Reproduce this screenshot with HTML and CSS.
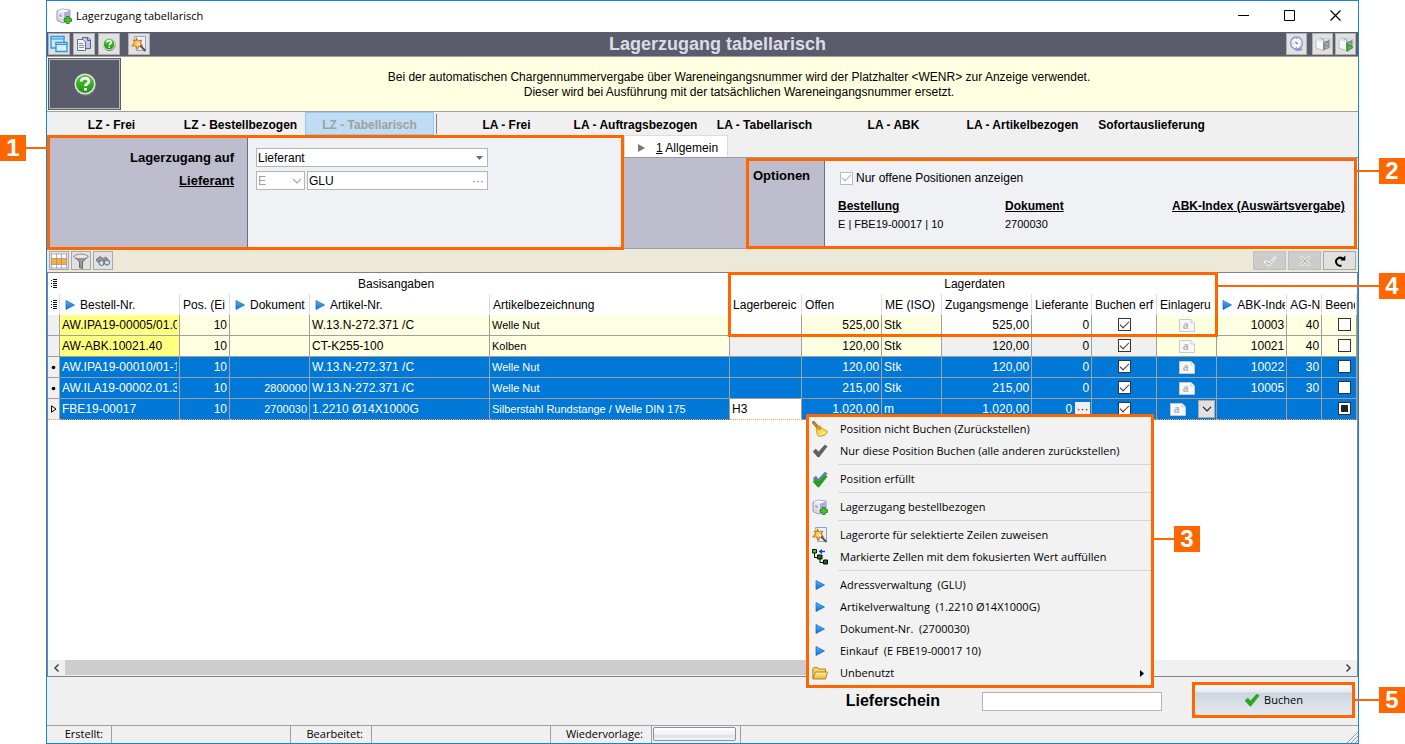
FILE: index.html
```html
<!DOCTYPE html>
<html lang="de">
<head>
<meta charset="utf-8">
<title>Lagerzugang tabellarisch</title>
<link rel="stylesheet" href="styles.css">
</head>
<body>
<svg class="defs" aria-hidden="true">
  <defs>
    <linearGradient id="gBlue" x1="0" y1="0" x2="0" y2="1"><stop offset="0" stop-color="#58b4f8"/><stop offset="1" stop-color="#0a6fd8"/></linearGradient>
    <linearGradient id="gFolder" x1="0" y1="0" x2="0" y2="1"><stop offset="0" stop-color="#fff0a8"/><stop offset="1" stop-color="#e8b53c"/></linearGradient>
    <linearGradient id="gGreen" x1="0" y1="0" x2="0" y2="1"><stop offset="0" stop-color="#52cc34"/><stop offset="1" stop-color="#1d9410"/></linearGradient>
    <symbol id="play" viewBox="0 0 10 10"><path d="M1 .5v9L9.500 5z" fill="url(#gBlue)" stroke="#1668bd" stroke-width=".7"/></symbol>
    <symbol id="box-plus" viewBox="0 0 16 16">
      <path d="M1 3 6 1l8 1v10L7 15 1 12.500z" fill="#e4e4f8" stroke="#8888b4" stroke-width=".9"/>
      <path d="M8 4.500v10L14 12V2.500z" fill="#aeaed4"/><path d="M1.500 3 8 4.500 13.500 2.200 6 1.200z" fill="#f8f8ff"/>
      <path d="M3 6l3 .8v2.400L3 8.500z" fill="#b0b0cc"/><path d="M2.500 11 5.500 12" stroke="#e8a860"/>
      <path d="M10.300 8.500h2.900v2.200h2.400v2.700h-2.400v2.200h-2.900v-2.200H8v-2.700h2.300z" fill="#4bc435" stroke="#167a0c" stroke-width=".8"/>
    </symbol>
    <symbol id="windows" viewBox="0 0 18 18">
      <path d="M6 13H1V1.500h13V7" fill="none" stroke="#1e9bf0" stroke-width="1.300"/><path d="M1 1.500h13v2.500H1z" fill="#9ad9fb" stroke="#1e9bf0"/>
      <path d="M6 7.500h11V16.500h-11z" fill="#e8ecf2" stroke="#1e9bf0" stroke-width="1.300"/><path d="M6 7.500h11v2h-11z" fill="#9ad9fb" stroke="#1e9bf0"/>
    </symbol>
    <symbol id="pages" viewBox="0 0 16 16">
      <path d="M6.500 1.500H12l2.500 2.500v8.500h-8z" fill="#c6c6ea" stroke="#5c5c96"/><path d="M11.500 1.500v3h3" fill="none" stroke="#5c5c96"/>
      <path d="M1.500 3.500H7L9.500 6v8.500h-8z" fill="#f4f4fc" stroke="#6c6c9a"/><path d="M3 7.500h4M3 9.500h5M3 11.500h5" stroke="#8a8ab4"/>
    </symbol>
    <symbol id="help" viewBox="0 0 24 24">
      <circle cx="12.500" cy="13" r="10.800" fill="#6c7078"/><circle cx="12" cy="12" r="10.500" fill="#e0e6e0"/><circle cx="12" cy="12" r="9" fill="url(#gGreen)"/>
      <path d="M8.300 9.600C8.300 5 16 5.200 15.900 9.300c0 2.700-3.600 2.700-3.600 5" fill="none" stroke="#fff" stroke-width="2.800"/><path d="M11 16h2.800v2.600H11z" fill="#fff"/>
    </symbol>
    <symbol id="wand" viewBox="0 0 16 16">
      <path d="M3.500.5h11v14h-9z" fill="#edf1fb" stroke="#8fa3cf"/>
      <path d="M5.500 2.500 7.200 5l3.300-.8-1.200 3 2 2.600-3.300.2L6.500 13 5 10 1 9.800l2.500-2.500-1-3 2.500.6z" fill="#ffd070" stroke="#d8760c" stroke-width="1.100"/>
      <path d="M8 8.500l6.500 6.500" stroke="#555" stroke-width="2"/><path d="M7 7.500l2 2" stroke="#fff8b0" stroke-width="2"/>
    </symbol>
    <symbol id="clock" viewBox="0 0 16 16">
      <path d="M5 13 12 10.500l1.500 3L11 15H7z" fill="#9999d2"/><circle cx="7.500" cy="7" r="6" fill="#f0f0ff" stroke="#9595cf" stroke-width="1.300"/><path d="M7.500 2v1M7.500 11v1M2.500 7h1M11.500 7h1" stroke="#a0a0c8"/><path d="M6.500 6.500l2 1" stroke="#224"/>
    </symbol>
    <symbol id="cube" viewBox="0 0 16 16">
      <path d="M1 4 5.500 2l9.500 1.500v8l-7 3L1 12z" fill="#f7f7f3" stroke="#b4b4b4" stroke-width=".8"/><path d="M8 6v8.500l6.500-3v-8z" fill="#8b8b8b"/><path d="M1 4l7 2 6.500-2.300L5.500 2z" fill="#e4e4de"/><path d="M5.500 2.500 9 4v3" stroke="#69b9c6" fill="none"/><path d="M10 8h3M10 11h3" stroke="#c0c0c0"/>
    </symbol>
    <symbol id="broom" viewBox="0 0 16 16">
      <path d="M1.500 1.500 6 6.500" stroke="#a36a16" stroke-width="3" stroke-linecap="round"/><path d="M1 1.500 5.500 6" stroke="#e0ac48"/>
      <path d="M7.500 4.500 10.500 7.500 15.500 10.500c-.5 3-4.500 5-9 4.700C4.500 13 4.500 10 4.300 7.500z" fill="#f8dc4c" stroke="#b88d14" stroke-width=".8"/><path d="M4.300 7.500 7.500 4.500l2.500 3L7 10z" fill="#d99b25"/><path d="M7.500 14l5.500-2.500" stroke="#fff5a0"/>
    </symbol>
    <symbol id="tick" viewBox="0 0 16 16"><path d="M1 8.500 3.800 6l2.700 3L12.800 2 15.200 3.500 7 14H5.800z" fill="currentColor" stroke="currentColor" stroke-linejoin="round" stroke-width=".6"/></symbol>
    <symbol id="fill" viewBox="0 0 16 16">
      <path d="M.5.500h4v3.500h-4z" fill="#0e0" stroke="#000"/><path d="M5.500 6h4.500v4H5.500z" fill="#087808" stroke="#000"/><path d="M11.500 11h4v4h-4z" fill="#087808" stroke="#000"/>
      <path d="M13 2.500H9" stroke="#1238d8" stroke-width="1.400"/><path d="M6.500 2.500 10 0v5z" fill="#1238d8"/><path d="M2.500 4V8.500H5M8 10v3.500h3" fill="none" stroke="#000"/>
    </symbol>
    <symbol id="folder" viewBox="0 0 16 14"><path d="M.8 12.500V2.500l1-1H5.500L7 3h6.500v3" fill="#f5d06c" stroke="#b5851a"/><path d="M.8 13 3.500 6h12l-2 7z" fill="url(#gFolder)" stroke="#b5851a"/></symbol>
    <symbol id="list" viewBox="0 0 8 9"><path d="M1 1.500h1M1 4.500h1M1 7.500h1M3 .5h4M3 2.500h4M3 4.500h4M3 6.500h4M3 8.500h4" stroke="#111"/></symbol>
    <symbol id="note" viewBox="0 0 16 13"><path d="M.5.500h11.500l3.500 3.500v8.500H.5z" fill="#f8f8f8" stroke="#c9c9c9"/><path d="M12 .5v3.500h3.500" fill="#fff" stroke="#c9c9c9"/><text x="4" y="10" class="note-letter">a</text></symbol>
    <symbol id="chev" viewBox="0 0 10 6"><path d="M1 .8l4 4 4-4" fill="none" stroke="currentColor" stroke-width="1.200"/></symbol>
  </defs>
</svg>

<main class="window">
  <header class="titlebar">
    <svg class="i16"><use href="#box-plus"/></svg>
    <span class="titlebar-text">Lagerzugang tabellarisch</span>
    <div class="window-buttons">
      <button aria-label="Minimieren"><svg viewBox="0 0 11 11"><path d="M0 5.500h11" stroke="#000"/></svg></button>
      <button aria-label="Maximieren"><svg viewBox="0 0 11 11"><path d="M.5.500h10v10H.5z" fill="none" stroke="#000"/></svg></button>
      <button aria-label="Schließen"><svg viewBox="0 0 11 11"><path d="M.5.500l10 10M10.500.5l-10 10" stroke="#000" stroke-width="1.200"/></svg></button>
    </div>
  </header>

  <div class="toolbar">
    <div class="tools">
      <button aria-label="Fenster"><svg class="i18"><use href="#windows"/></svg></button>
      <button aria-label="Kopieren"><svg class="i16"><use href="#pages"/></svg></button>
      <button aria-label="Hilfe"><svg class="i14"><use href="#help"/></svg></button>
      <button class="apart" aria-label="Assistent"><svg class="i16"><use href="#wand"/></svg></button>
    </div>
    <h1>Lagerzugang tabellarisch</h1>
    <div class="tools tools-right">
      <button aria-label="Wiedervorlage"><svg class="i16"><use href="#clock"/></svg></button>
      <button class="apart-small" aria-label="Artikel"><svg class="i16"><use href="#cube"/></svg></button>
      <button aria-label="Artikel starten"><svg class="i16" viewBox="0 0 16 16"><use href="#cube"/><path d="M9 7.500v8l6-4z" fill="#3fbf2c" stroke="#157a0c" stroke-width=".6"/></svg></button>
    </div>
  </div>

  <div class="info">
    <button class="info-help" aria-label="Hilfe"><svg><use href="#help"/></svg></button>
    <p>Bei der automatischen Chargennummervergabe über Wareneingangsnummer wird der Platzhalter &lt;WENR&gt; zur Anzeige verwendet.<br>Dieser wird bei Ausführung mit der tatsächlichen Wareneingangsnummer ersetzt.</p>
  </div>

  <nav class="modes">
    <button>LZ - Frei</button><button>LZ - Bestellbezogen</button><button class="current" disabled>LZ - Tabellarisch</button>
    <span class="divider"></span>
    <button>LA - Frei</button><button>LA - Auftragsbezogen</button><button>LA - Tabellarisch</button><button>LA - ABK</button><button>LA - Artikelbezogen</button><button>Sofortauslieferung</button>
  </nav>

  <div class="panels">
    <section class="source">
      <div class="source-labels">
        <label for="auf">Lagerzugang auf</label>
        <a href="#lieferant">Lieferant</a>
      </div>
      <div class="source-fields">
        <div class="select wide"><select id="auf"><option>Lieferant</option></select><svg viewBox="0 0 7 4"><path d="M0 0h7L3.500 4z" fill="#707070"/></svg></div>
        <div class="field-row">
          <div class="select off"><select disabled aria-label="Typ"><option>E</option></select><svg class="chev"><use href="#chev"/></svg></div>
          <div class="lookup"><input id="lieferant" aria-label="Lieferant" value="GLU"><button aria-label="Suchen">···</button></div>
        </div>
      </div>
      <div class="frame frame-1"></div><div class="badge badge-1"><i></i><b>1</b></div>
    </section>

    <section class="general">
      <div class="tabs"><button><svg viewBox="0 0 7 8"><path d="M0 0v8l7-4z" fill="#777"/></svg><span><u>1</u> Allgemein</span></button></div>
      <div class="options">
        <div class="options-space"></div>
        <h2>Optionen</h2>
        <div class="options-body">
          <label class="check-label"><input type="checkbox" class="check soft" checked disabled>Nur offene Positionen anzeigen</label>
          <dl>
            <div><dt>Bestellung</dt><dd>E | FBE19-00017 | 10</dd></div>
            <div><dt>Dokument</dt><dd>2700030</dd></div>
            <div class="abk"><dt>ABK-Index (Auswärtsvergabe)</dt></div>
          </dl>
        </div>
        <div class="frame frame-2"></div><div class="badge badge-2"><i></i><b>2</b></div>
      </div>
    </section>
  </div>

  <div class="gridbar">
    <button aria-label="Spalten"><svg class="i16" viewBox="0 0 16 15"><path d="M0 0h16v15H0z" fill="#fff"/><path d="M0 5h16v6H0z" fill="#ffad32"/><path d="M0 .5h16M0 5h16M0 11h16M0 14.500h16M.5 0v15M5.500 0v15M10.500 0v15M15.500 0v15" stroke="#8e8ea8" stroke-width=".7"/></svg></button>
    <button aria-label="Filter"><svg class="i16" viewBox="0 0 16 16"><path d="M1 3.500 6.500 9v5.500l3 1V9L15 3.500z" fill="#999" stroke="#555" stroke-width=".8"/><ellipse cx="8" cy="3.500" rx="7" ry="2.300" fill="#e8e8e8" stroke="#777" stroke-width=".8"/></svg></button>
    <button aria-label="Suchen"><svg class="i16" viewBox="0 0 16 16"><path d="M1.500 6 5 3.500l3 2 3-1.500 4 5-3 3-4-2-1 1.500L1.500 8z" fill="#969696" stroke="#666" stroke-width=".7"/><circle cx="6.500" cy="10" r="2.500" fill="#c4e1fa" stroke="#667"/><circle cx="12" cy="9.500" r="2.500" fill="#c4e1fa" stroke="#667"/></svg></button>
    <span class="grow"></span>
    <button class="long dim" disabled aria-label="Übernehmen"><svg class="i16" viewBox="0 0 16 16"><path d="M2 9l2.500-1L7 10l6-6.500.8.8L7 13z" fill="#b4b4b4" stroke="#fff"/></svg></button>
    <button class="long dim" disabled aria-label="Verwerfen"><svg class="i16" viewBox="0 0 16 16"><path d="M3 4.500l1.500-1.500L8 6.500 11.500 3 13 4.500 9.500 8l3.500 3.500-1.500 1.500L8 9.500 4.500 13 3 11.500 6.500 8z" fill="#b4b4b4" stroke="#fff"/></svg></button>
    <button class="long" aria-label="Aktualisieren"><svg class="i16" viewBox="0 0 16 16"><path d="M9.500 12.500A4 4 0 1 1 11 6" fill="none" stroke="#000" stroke-width="2"/><path d="M8.300 7.500h5V2.500z" fill="#000"/></svg></button>
  </div>

  <section class="gridarea">
    <table class="grid">
      <colgroup><col class="c12"><col class="c120"><col class="c50"><col class="c80"><col class="c180"><col class="c240"><col class="c72"><col class="c80"><col class="c60"><col class="c90"><col class="c60"><col class="c65"><col class="c60"><col class="c70"><col class="c35"><col></colgroup>
      <thead>
        <tr class="bands"><th class="mark"><svg class="list"><use href="#list"/></svg></th><th colspan="5" class="center">Basisangaben</th><th colspan="7" class="center">Lagerdaten</th><th colspan="3"></th></tr>
        <tr><th class="mark"><svg class="list"><use href="#list"/></svg></th><th class="link"><span><svg><use href="#play"/></svg>Bestell-Nr.</span></th><th><span>Pos. (Ei</span></th><th class="link"><span><svg><use href="#play"/></svg>Dokument</span></th><th class="link"><span><svg><use href="#play"/></svg>Artikel-Nr.</span></th><th><span>Artikelbezeichnung</span></th><th><span>Lagerbereic</span></th><th><span>Offen</span></th><th><span>ME (ISO)</span></th><th><span>Zugangsmenge</span></th><th><span>Lieferante</span></th><th><span>Buchen erf</span></th><th><span>Einlageru</span></th><th class="link"><span><svg><use href="#play"/></svg>ABK-Inde</span></th><th><span>AG-N</span></th><th><span>Beend</span></th></tr>
      </thead>
      <tbody>
        <tr><td class="mark"></td><td class="key"><span>AW.IPA19-00005/01.0</span></td><td class="num">10</td><td class="num small"></td><td>W.13.N-272.371 /C</td><td class="small">Welle Nut</td><td class="white"></td><td class="num">525,00</td><td>Stk</td><td class="num white">525,00</td><td class="num white">0</td><td class="white center"><input type="checkbox" class="check" aria-label="Buchen" checked></td><td class="center"><svg class="note"><use href="#note"/></svg></td><td class="num">10003</td><td class="num">40</td><td class="last"><input type="checkbox" class="check" aria-label="Beendet"></td></tr>
        <tr><td class="mark"></td><td class="key"><span>AW-ABK.10021.40</span></td><td class="num">10</td><td class="num small"></td><td>CT-K255-100</td><td class="small">Kolben</td><td class="gray"></td><td class="num">120,00</td><td>Stk</td><td class="num gray">120,00</td><td class="num gray">0</td><td class="gray center"><input type="checkbox" class="check" aria-label="Buchen" checked></td><td class="center"><svg class="note"><use href="#note"/></svg></td><td class="num">10021</td><td class="num">40</td><td class="last"><input type="checkbox" class="check" aria-label="Beendet"></td></tr>
        <tr class="sel"><td class="mark"><svg viewBox="0 0 5 5"><circle cx="2.500" cy="2.500" r="1.800"/></svg></td><td><span>AW.IPA19-00010/01-1</span></td><td class="num">10</td><td class="num small"></td><td>W.13.N-272.371 /C</td><td class="small">Welle Nut</td><td></td><td class="num">120,00</td><td>Stk</td><td class="num">120,00</td><td class="num">0</td><td class="center"><input type="checkbox" class="check" aria-label="Buchen" checked></td><td class="center"><svg class="note"><use href="#note"/></svg></td><td class="num">10022</td><td class="num">30</td><td class="last"><input type="checkbox" class="check" aria-label="Beendet"></td></tr>
        <tr class="sel"><td class="mark"><svg viewBox="0 0 5 5"><circle cx="2.500" cy="2.500" r="1.800"/></svg></td><td><span>AW.ILA19-00002.01.3</span></td><td class="num">10</td><td class="num small">2800000</td><td>W.13.N-272.371 /C</td><td class="small">Welle Nut</td><td></td><td class="num">215,00</td><td>Stk</td><td class="num">215,00</td><td class="num">0</td><td class="center"><input type="checkbox" class="check" aria-label="Buchen" checked></td><td class="center"><svg class="note"><use href="#note"/></svg></td><td class="num">10005</td><td class="num">30</td><td class="last"><input type="checkbox" class="check" aria-label="Beendet"></td></tr>
        <tr class="sel focus"><td class="mark"><svg class="cursor" viewBox="0 0 6 8"><path d="M.5.800v6.400L5 4z" fill="none" stroke="#000"/></svg></td><td><span>FBE19-00017</span></td><td class="num">10</td><td class="num small">2700030</td><td>1.2210 Ø14X1000G</td><td class="small">Silberstahl Rundstange / Welle DIN 175</td><td class="edit">H3</td><td class="num">1.020,00</td><td>m</td><td class="num">1.020,00</td><td class="pick"><div>0<button aria-label="Auswählen">···</button></div></td><td class="center"><input type="checkbox" class="check" aria-label="Buchen" checked></td><td class="pick"><div><svg class="note"><use href="#note"/></svg><button class="drop" aria-label="Öffnen"><svg class="chev"><use href="#chev"/></svg></button></div></td><td></td><td></td><td class="last"><input type="checkbox" class="check mixed" aria-label="Beendet"></td></tr>
      </tbody>
    </table>
    <div class="scroll"><button aria-label="Nach links"><svg viewBox="0 0 5 8"><path d="M4.500.5 1 4l3.500 3.500" fill="none" stroke="#444" stroke-width="1.500"/></svg></button><div class="track"><div class="thumb"></div></div><button aria-label="Nach rechts"><svg viewBox="0 0 5 8"><path d="M.5.500 4 4 .5 7.500" fill="none" stroke="#444" stroke-width="1.500"/></svg></button></div>
    <div class="frame frame-4"></div><div class="badge badge-4"><i></i><b>4</b></div>

    <div class="menu" role="menu">
      <button role="menuitem"><svg class="i16"><use href="#broom"/></svg>Position nicht Buchen (Zurückstellen)</button>
      <button role="menuitem"><svg class="i16 tick-gray"><use href="#tick"/></svg>Nur diese Position Buchen (alle anderen zurückstellen)</button>
      <hr>
      <button role="menuitem"><svg class="i16" viewBox="0 0 16 16"><g color="#7777bd" transform="translate(0 -1)"><use href="#tick"/></g><g color="#23a31d" transform="translate(0 2)"><use href="#tick"/></g></svg>Position erfüllt</button>
      <hr>
      <button role="menuitem"><svg class="i16"><use href="#box-plus"/></svg>Lagerzugang bestellbezogen</button>
      <hr>
      <button role="menuitem"><svg class="i16"><use href="#wand"/></svg>Lagerorte für selektierte Zeilen zuweisen</button>
      <button role="menuitem"><svg class="i16"><use href="#fill"/></svg>Markierte Zellen mit dem fokusierten Wert auffüllen</button>
      <hr>
      <button role="menuitem"><svg class="go"><use href="#play"/></svg>Adressverwaltung&nbsp; (GLU)</button>
      <button role="menuitem"><svg class="go"><use href="#play"/></svg>Artikelverwaltung&nbsp; (1.2210 Ø14X1000G)</button>
      <button role="menuitem"><svg class="go"><use href="#play"/></svg>Dokument-Nr.&nbsp; (2700030)</button>
      <button role="menuitem"><svg class="go"><use href="#play"/></svg>Einkauf&nbsp; (E FBE19-00017 10)</button>
      <button role="menuitem"><svg class="i16"><use href="#folder"/></svg>Unbenutzt<svg class="sub" viewBox="0 0 4 7"><path d="M0 0v7l4-3.500z"/></svg></button>
      <div class="badge badge-3"><i></i><b>3</b></div>
    </div>
  </section>

  <div class="booking">
    <label for="schein">Lieferschein</label>
    <input id="schein">
    <div class="book-wrap">
      <button class="book"><svg class="i16"><use href="#tick"/></svg>Buchen</button>
      <div class="badge badge-5"><i></i><b>5</b></div>
    </div>
  </div>

  <footer class="status">
    <span class="s60">Erstellt:</span><span class="s176"></span><span class="s78">Bearbeitet:</span><span class="s176"></span><span class="s98">Wiedervorlage:</span><span class="s86"><button aria-label="Wiedervorlage"></button></span><span class="rest"><svg viewBox="0 0 12 12"><path d="M1 12 12 1M5 12l7-7M9 12l3-3" stroke="#999"/></svg></span>
  </footer>
</main>
</body>
</html>
```
FILE: styles.css
```css
* { box-sizing: border-box; }
body {
  margin: 0;
  padding: 0 46px;
  background: #fff;
  font: 12px/16px "Liberation Sans", Arial, sans-serif;
  color: #000;
}
button, input, select { font: inherit; color: inherit; margin: 0; padding: 0; border-radius: 0; }
button { border: 0; background: none; }
svg { display: block; flex: none; overflow: visible; }
.defs { position: absolute; width: 0; height: 0; }
.i14 { width: 14px; height: 14px; }
.i16 { width: 16px; height: 16px; }
.i18 { width: 18px; height: 18px; }
.note-letter { font: italic bold 10px "Liberation Sans", sans-serif; fill: #b0b0b0; }

.window {
  position: relative;
  display: flex;
  flex-direction: column;
  min-height: 100vh;
  min-width: 1313px;
  border: 1px solid #1883d7;
  background: #f0f0f0;
}

/* Title bar */
.titlebar { display: flex; align-items: center; gap: 4px; height: 31px; padding: 0 0 2px 9px; background: #fff; }
.titlebar-text { flex: 1; font: 11px/16px "Open Sans", sans-serif; }
.window-buttons { display: flex; }
.window-buttons button { display: grid; place-items: center; width: 46px; height: 29px; }
.window-buttons svg { width: 11px; height: 11px; }

/* Toolbar */
.toolbar {
  display: grid;
  grid-template-columns: 200px 1fr 200px;
  align-items: center;
  height: 25px;
  border-bottom: 1px solid #a0a0a0;
  background: #5a5c6c;
}
.toolbar h1 { margin: 0; font-size: 18px; line-height: 24px; text-align: center; color: #dcdce4; padding-left: 30px; }
.tools { display: flex; gap: 3px; padding: 0 2px 0 1px; }
.tools button { display: grid; place-items: center; width: 22px; height: 22px; border: 1px solid #b0b0b0; background: #e1e1e1; }
.tools-right { justify-content: flex-end; gap: 2px; }
.tools-right button { width: 21px; }
.tools .apart { margin-left: 5px; }
.tools .apart-small { margin-left: 3px; }

/* Info strip */
.info { display: flex; height: 55px; padding: 1px; border-bottom: 1px solid #a0a0a0; background: #ffffe1; }
.info-help { display: grid; place-items: center; width: 73px; border: 1px solid #5a5c6c; outline: 1px solid #b8b8c0; outline-offset: -2px; background: #5a5c6c; }
.info-help svg { width: 24px; height: 24px; }
.info p { flex: 1; margin: 0; padding-top: 12px; line-height: 15px; text-align: center; }

/* Mode switch */
.modes { display: flex; height: 23px; }
.modes button { width: 129px; padding-top: 2px; font-weight: bold; }
.modes .current { border: 1px solid #90c8f6; background: #c0dcf3; color: #a0a0a0; }
.divider { width: 1px; height: 20px; margin: 2px 5px 0 2px; background: #808080; }

/* Upper panels */
.panels { display: grid; grid-template-columns: 577px 1fr; height: 114px; }
.source { position: relative; display: flex; background: #f0f1f4; }
.source-labels {
  display: flex; flex-direction: column; align-items: flex-end; gap: 7px;
  width: 201px; padding: 15px 13px 0 0; border-right: 1px solid #707078;
  background: #bdbdce; font-size: 13px; font-weight: bold;
}
.source-labels a { color: inherit; }
.source-fields { display: flex; flex-direction: column; gap: 4px; padding: 13px 0 0 8px; }
.select { position: relative; display: flex; }
.select select { appearance: none; width: 100%; height: 19px; padding: 0 1px; border: 1px solid #b4b4bc; background: #fff; }
.select svg { position: absolute; right: 5px; top: 8px; width: 7px; height: 4px; }
.select.wide { width: 232px; }
.select.off { width: 49px; color: #a0a0a0; }
.select.off select { opacity: 1; color: #a0a0a0; }
.select .chev { width: 10px; height: 6px; right: 3px; top: 7px; }
.field-row { display: flex; gap: 2px; }
.lookup { display: flex; width: 181px; height: 19px; border: 1px solid #b4b4bc; background: #fff; }
.lookup input { flex: 1; min-width: 0; border: 0; padding: 0 1px; background: none; }
.lookup button { width: 18px; line-height: 14px; color: #777; }

.general { display: flex; flex-direction: column; min-width: 0; }
.tabs { height: 22px; }
.tabs button { display: flex; align-items: center; gap: 11px; height: 22px; padding: 2px 9px 0 13px; border: 1px solid #ddd; border-bottom: 0; background: #fff; }
.tabs svg { width: 7px; height: 8px; }
.options { position: relative; flex: 1; display: flex; border-top: 1px solid #9a9aa4; border-bottom: 1px solid #a0a0a0; background: #f0f1f4; }
.options-space { width: 123px; background: #bdbdce; }
.options h2 { width: 78px; margin: 0; padding: 10px 0 0 6px; border-right: 1px solid #707078; background: #bdbdce; font-size: 13px; line-height: 16px; }
.options-body { flex: 1; padding: 12px 0 0 13px; }
.check-label { display: flex; align-items: center; gap: 3px; padding-left: 2px; }
.options dl { display: flex; margin: 12px 0 0; }
.options dl div { flex: none; width: 167px; }
.options dl .abk { width: auto; margin-left: auto; padding-right: 22px; }
.options dl .abk { padding-right: 30px; }
.options dt { font-weight: bold; text-decoration: underline; }
.options dd { margin: 2px 0 0; font-size: 11px; }

.check {
  appearance: none; display: inline-grid; place-items: center; flex: none;
  width: 13px; height: 13px; border: 1px solid #333; background: #fff; vertical-align: middle;
}
.check:checked::after { content: ""; width: 8px; height: 4px; margin-bottom: 3px; border: solid #333; border-width: 0 0 1px 1px; transform: rotate(-45deg); }
.check.soft { border-color: #bcbcbc; }
.check.soft::after { border-color: #aaa; }
.check.mixed::after { content: ""; width: 7px; height: 7px; background: #222; }

/* Grid toolbar */
.gridbar { display: flex; gap: 2px; height: 23px; padding: 2px 2px 1px; background: #ece9d8; }
.gridbar button { display: grid; place-items: center; width: 20px; height: 19px; border: 1px solid #a8a8a8; background: #e1e1e1; }
.gridbar .long { width: 33px; }
.gridbar .dim { background: #ccc; border-color: #bfbfbf; }
.grow { flex: 1; }

/* Data grid */
.gridarea { position: relative; flex: 1; display: flex; flex-direction: column; border: 1px solid #808090; background: #fff; }
.grid { width: 100%; table-layout: fixed; border-collapse: separate; border-spacing: 0; }
.c12 { width: 12px; } .c35 { width: 35px; } .c50 { width: 50px; } .c60 { width: 60px; }
.c65 { width: 65px; } .c70 { width: 70px; } .c72 { width: 72px; } .c80 { width: 80px; }
.c90 { width: 90px; } .c120 { width: 120px; } .c180 { width: 180px; } .c240 { width: 240px; }
.grid th, .grid td { height: 21px; padding: 0 2px; text-align: left; white-space: nowrap; overflow: hidden; font-weight: normal; }
.grid th { padding: 0 1px 0 3px; border-right: 1px solid #ddd; }
.grid .bands th { border: 0; }
.grid th span, .grid td span { display: block; overflow: hidden; }
.grid .link span { display: flex; align-items: center; gap: 5px; padding-left: 2px; }
.grid .link svg { width: 10px; height: 10px; }
.grid td { border: solid #a0a0a0; border-width: 0 1px 1px 0; background: #ffffe1; }
.grid .center { text-align: center; }
.grid .num { text-align: right; }
.grid .last { padding-left: 16px; }
.grid .small { font-size: 11px; }
.grid .key { background: #ffff80; }
.grid .white { background: #fff; }
.grid .gray, .grid td.mark { background: #f0f0f0; }
.grid .mark { padding: 0 2px; }
.grid .mark svg { width: 5px; height: 5px; margin: 0 0 0 1px; }
.grid .mark .list { width: 8px; height: 9px; margin: 0; }
.grid .mark .cursor { width: 6px; height: 8px; }
.grid .sel td { background: #0078d7; color: #fff; }
.grid .sel td.mark { background: #f0f0f0; }
.grid .focus td { border-bottom: 1px dotted #ffa050; }
.grid .focus td.edit { background: #fff; color: #000; }
.grid .check { margin-bottom: 2px; }
.grid .center .note { margin: 0 auto; }
.note { width: 16px; height: 13px; }
.grid .pick { padding: 0; }
.pick div { display: flex; align-items: center; justify-content: flex-end; gap: 3px; height: 20px; }
.pick button { width: 15px; height: 14px; line-height: 10px; background: #f0f0f0; color: #222; margin-right: 1px; }
.pick .drop { display: grid; place-items: center; width: 17px; height: 18px; margin-left: 9px; border: 1px solid #aaa; background: #e1e1e1; }
.pick .chev { width: 10px; height: 6px; }

.scroll { display: flex; height: 16px; margin-top: auto; background: #f0f0f0; }
.scroll button { display: grid; place-items: center; width: 17px; }
.scroll button svg { width: 5px; height: 8px; }
.track { flex: 1; }
.thumb { width: 74%; height: 15px; background: #cdcdcd; }

/* Context menu */
.menu { position: absolute; left: 758px; top: 141px; width: 348px; padding: 1px 0; border: 3px solid #f60; background: #f2f2f2; }
.menu button { display: flex; align-items: center; width: 100%; height: 22px; padding-left: 3px; gap: 12px; font: 11px/16px "Open Sans", sans-serif; text-align: left; }
.menu .go { width: 10px; height: 10px; margin: 0 3px; }
.menu hr { height: 1px; margin: 2px 0 3px 29px; border: 0; background: #d7d7d7; }
.menu .sub { width: 4px; height: 7px; margin: 0 7px 0 auto; }
.tick-gray { color: #606060; }

/* Booking row */
.booking { display: flex; align-items: center; justify-content: flex-end; height: 48px; padding-right: 3px; }
.booking label { margin-right: 42px; font-size: 16px; font-weight: bold; }
.booking input { width: 180px; height: 19px; margin-right: 30px; border: 1px solid #b4b4c0; background: #fff; }
.book-wrap { position: relative; margin-bottom: 2px; }
.book {
  display: flex; align-items: center; justify-content: center; gap: 4px; width: 163px; height: 36px;
  border: 3px solid #f60; background: linear-gradient(#f6f8fa 0, #e6ebf0 24%, #cbd5df 26%, #e4e9ef 100%);
  font: 11px/16px "Open Sans", sans-serif;
}
.book svg { color: #27a81d; }

/* Status bar */
.status { display: flex; gap: 3px; height: 18px; padding-left: 1px; border-top: 1px solid #a0a0a0; font: 11px/16px "Open Sans", sans-serif; }
.status span { padding-right: 5px; border-left: 1px solid #a0a0a0; text-align: right; }
.status .s60 { border-left: 0; }
.s60 { width: 60px; } .s78 { width: 78px; } .s98 { width: 98px; } .s176 { width: 176px; } .s86 { width: 86px; }
.status button { display: block; width: 83px; height: 14px; margin: 1px; border: 1px solid #8e8f98; border-radius: 2px; background: linear-gradient(#fff 0, #eef1f5 55%, #d8dfe8 65%, #f6f8fa 100%); }
.status .rest { flex: 1; display: flex; align-items: flex-end; justify-content: flex-end; padding-right: 0; }
.status .rest svg { width: 12px; height: 12px; }

/* Numbered callouts */
.frame { position: absolute; border: 3px solid #f60; pointer-events: none; }
.frame-1 { inset: 0 0 -1px; }
.frame-2 { inset: 0 1px -1px 122px; }
.frame-4 { left: 680px; top: -1px; width: 490px; height: 65px; }
.badge { position: absolute; display: flex; align-items: center; }
.badge i { height: 2px; background: #f60; }
.badge b { width: 26px; height: 26px; background: #f60; color: #fff; font-size: 24px; line-height: 26px; text-align: center; }
.badge-1 { left: -47px; top: 0; flex-direction: row-reverse; }
.badge-1 i { width: 21px; }
.badge-2 { right: -47px; top: 0; }
.badge-2 i { width: 22px; }
.badge-3 { left: 345px; top: 109px; }
.badge-3 i { width: 20px; }
.badge-4 { left: 1170px; right: -48px; top: 0; }
.badge-4 i { flex: 1; }
.badge-5 { right: -50px; top: 5px; }
.badge-5 i { width: 25px; }
```
